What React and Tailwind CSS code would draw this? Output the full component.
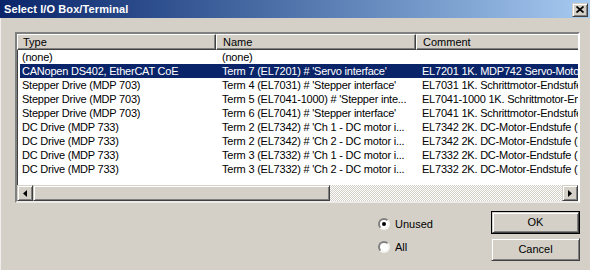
import React from "react";

const ROWS = [
  ["(none)", "(none)", ""],
  ["CANopen DS402, EtherCAT CoE", "Term 7 (EL7201) # 'Servo interface'", "EL7201 1K. MDP742 Servo-Motor-Endstufe (50V, 4.5A)"],
  ["Stepper Drive (MDP 703)", "Term 4 (EL7031) # 'Stepper interface'", "EL7031 1K. Schrittmotor-Endstufe (24V, 1.5A)"],
  ["Stepper Drive (MDP 703)", "Term 5 (EL7041-1000) # 'Stepper inte...", "EL7041-1000 1K. Schrittmotor-Endstufe (50V, 5A)"],
  ["Stepper Drive (MDP 703)", "Term 6 (EL7041) # 'Stepper interface'", "EL7041 1K. Schrittmotor-Endstufe (50V, 5A)"],
  ["DC Drive (MDP 733)", "Term 2 (EL7342) # 'Ch 1 - DC motor i...", "EL7342 2K. DC-Motor-Endstufe (50V, 3.5A)"],
  ["DC Drive (MDP 733)", "Term 2 (EL7342) # 'Ch 2 - DC motor i...", "EL7342 2K. DC-Motor-Endstufe (50V, 3.5A)"],
  ["DC Drive (MDP 733)", "Term 3 (EL7332) # 'Ch 1 - DC motor i...", "EL7332 2K. DC-Motor-Endstufe (24V, 1A)"],
  ["DC Drive (MDP 733)", "Term 3 (EL7332) # 'Ch 2 - DC motor i...", "EL7332 2K. DC-Motor-Endstufe (24V, 1A)"],
];

const SELECTED = 1;

// classic win2k raised bevel
const raised =
  "border border-t-[#d4d0c8] border-l-[#d4d0c8] border-r-[#404040] border-b-[#404040] shadow-[inset_1px_1px_#ffffff,inset_-1px_-1px_#808080] bg-[#d4d0c8]";

function HeaderCell({ label, className }) {
  return (
    <div
      className={
        "h-[16px] shrink-0 border-t border-l border-t-white border-l-white border-r border-b border-r-[#404040] border-b-[#404040] shadow-[inset_-1px_-1px_#808080] flex items-center leading-[14px] " +
        className
      }
    >
      {label}
    </div>
  );
}

function Arrow({ dir }) {
  return (
    <svg width="4" height="7" viewBox="0 0 4 7">
      {dir === "left" ? (
        <path d="M4 0 L0 3.5 L4 7 Z" fill="#000" />
      ) : (
        <path d="M0 0 L4 3.5 L0 7 Z" fill="#000" />
      )}
    </svg>
  );
}

function Radio({ checked, label }) {
  return (
    <div className="flex items-center h-[14px] gap-[5px]">
      <div className="w-[12px] h-[12px] rounded-full bg-white border-2 border-t-[#808080] border-l-[#808080] border-r-[#f4f3f0] border-b-[#f4f3f0] flex items-center justify-center">
        {checked && <div className="w-[4px] h-[4px] rounded-full bg-black" />}
      </div>
      <span className="leading-[14px]">{label}</span>
    </div>
  );
}

export default function App() {
  return (
    <div className="w-[590px] h-[270px] overflow-hidden bg-[#d4d0c8] text-[11px] text-black font-['Liberation_Sans',Arial,sans-serif] flex flex-col">
      {/* title bar */}
      <div className="h-[18px] shrink-0 flex items-center bg-gradient-to-r from-[#0a246a] to-[#a6caf0] pl-[4px] pr-[2px]">
        <span className="text-white font-bold text-[11px] leading-[14px] tracking-[0.1px]">
          Select I/O Box/Terminal
        </span>
        <div className={"ml-auto mt-[1px] w-[16px] h-[14px] flex items-center justify-center " + raised}>
          <svg width="8" height="7" viewBox="0 0 8 7">
            <path d="M0.5 0.5 L7.5 6.5 M7.5 0.5 L0.5 6.5" stroke="#000" strokeWidth="1.7" />
          </svg>
        </div>
      </div>

      <div className="flex-1 flex flex-col border-l border-l-[#f0efec] pl-[14px] pt-[14px]">
        {/* list view */}
        <div className="w-[565px] h-[171px] shrink-0 border-2 border-t-[#808080] border-l-[#808080] border-r-white border-b-[#ecebe8] shadow-[inset_1px_1px_#404040] bg-white flex flex-col overflow-hidden">
          <div className="flex bg-[#d4d0c8] shrink-0 overflow-hidden">
            <HeaderCell label="Type" className="w-[199px] pl-[5px]" />
            <HeaderCell label="Name" className="w-[200px] pl-[6px]" />
            <HeaderCell label="Comment" className="w-[200px] pl-[6px]" />
          </div>
          <div className="flex flex-col tracking-[-0.22px]">
            {ROWS.map((r, i) => (
              <div key={i} className="flex h-[14px] pl-[3px] whitespace-nowrap leading-[14px]">
                <div
                  className={
                    "flex flex-1 overflow-hidden " +
                    (i === SELECTED ? "bg-[#0a246a] text-white" : "")
                  }
                >
                  <div className="w-[196px] shrink-0 pl-[2px] overflow-hidden">{r[0]}</div>
                  <div className="w-[200px] shrink-0 pl-[6px] overflow-hidden">{r[1]}</div>
                  <div className="flex-1 pl-[6px] overflow-hidden">{r[2]}</div>
                </div>
              </div>
            ))}
          </div>
          <div className="flex-1" />
          {/* horizontal scrollbar */}
          <div className="h-[16px] shrink-0 flex">
            <div className={"w-[16px] h-[16px] flex items-center justify-center " + raised}>
              <Arrow dir="left" />
            </div>
            <div className={"w-[297px] h-[16px] " + raised} />
            <div className="flex-1 bg-[repeating-conic-gradient(#ffffff_0_25%,#d4d0c8_0_50%)] bg-[length:2px_2px]" />
            <div className={"w-[16px] h-[16px] flex items-center justify-center " + raised}>
              <Arrow dir="right" />
            </div>
          </div>
        </div>

        {/* bottom controls */}
        <div className="flex pt-[8px] pl-[363px]">
          <div className="w-[113px] flex flex-col gap-[9px] pt-[6px]">
            <Radio checked label="Unused" />
            <Radio label="All" />
          </div>
          <div className="flex flex-col gap-[4px]">
            <div className="w-[89px] h-[23px] border border-black">
              <div className={"w-full h-full flex items-center justify-center " + raised}>OK</div>
            </div>
            <div className={"w-[89px] h-[23px] flex items-center justify-center " + raised}>Cancel</div>
          </div>
        </div>
      </div>
    </div>
  );
}
